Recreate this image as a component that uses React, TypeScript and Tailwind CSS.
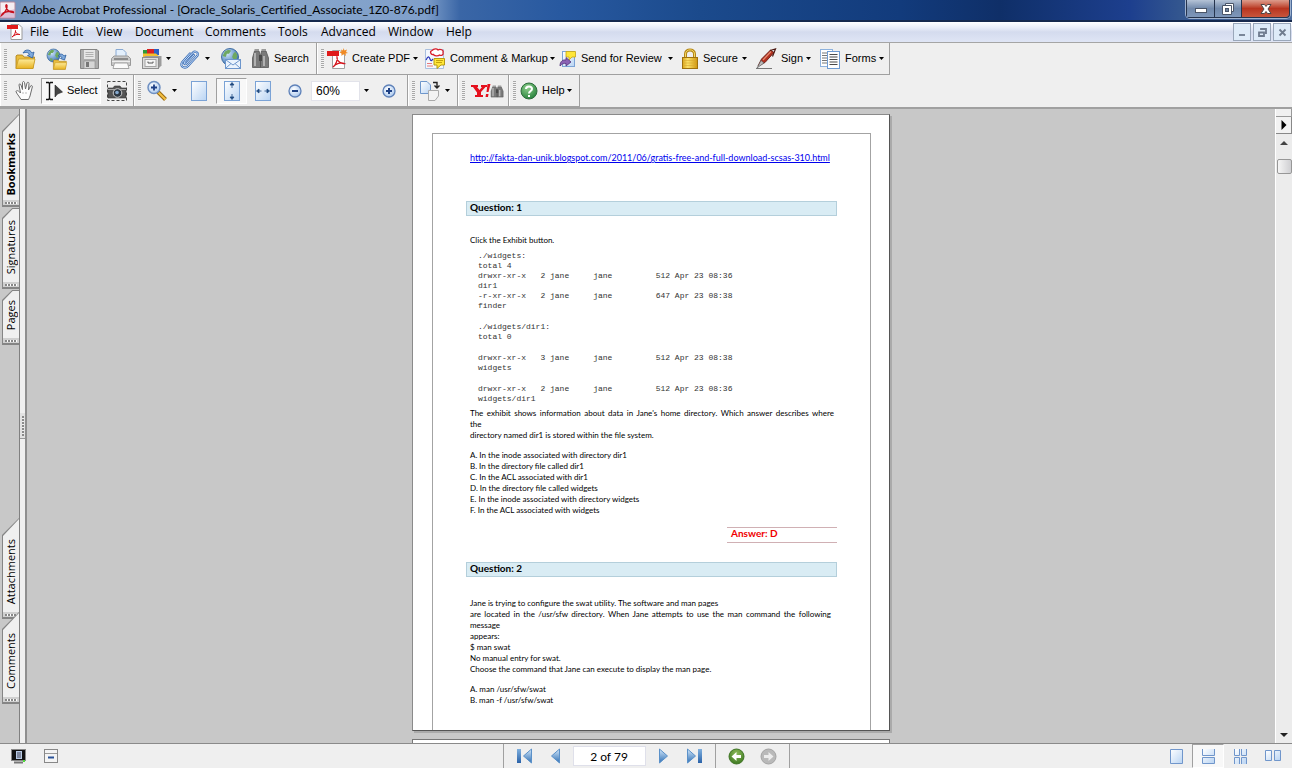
import type { ReactNode } from "react";

const SEGOE = "font-['Open_Sans','Noto_Sans',sans-serif]";
const CAPTION = "font-['Lato','Open_Sans',sans-serif] [font-variant-ligatures:none]";

/* ---------- icons ---------- */

function Svg({ w = 22, h = 22, children }: { w?: number; h?: number; children: ReactNode }) {
  return (
    <svg width={w} height={h} viewBox={`0 0 ${w} ${h}`} className="shrink-0" aria-hidden="true">
      {children}
    </svg>
  );
}

function Defs() {
  return (
    <svg width="0" height="0" className="absolute" aria-hidden="true">
      <defs>
        <linearGradient id="gold" x1="0" y1="0" x2="0" y2="1">
          <stop offset="0" stopColor="#fdeb9a" />
          <stop offset="1" stopColor="#e9b321" />
        </linearGradient>
        <linearGradient id="lockg" x1="0" y1="0" x2="1" y2="0">
          <stop offset="0" stopColor="#d9a41c" />
          <stop offset=".35" stopColor="#fbe26a" />
          <stop offset="1" stopColor="#cf950f" />
        </linearGradient>
        <linearGradient id="sheet" x1="0" y1="0" x2="1" y2="1">
          <stop offset="0" stopColor="#ffffff" />
          <stop offset="1" stopColor="#b9d4f3" />
        </linearGradient>
        <linearGradient id="bluev" x1="0" y1="0" x2="0" y2="1">
          <stop offset="0" stopColor="#d3e8fb" />
          <stop offset="1" stopColor="#2f6fb4" />
        </linearGradient>
        <linearGradient id="bar" x1="0" y1="0" x2="0" y2="1">
          <stop offset="0" stopColor="#7fb0df" />
          <stop offset="1" stopColor="#2a62a8" />
        </linearGradient>
        <radialGradient id="globe" cx=".35" cy=".3" r=".8">
          <stop offset="0" stopColor="#cfe6fb" />
          <stop offset="1" stopColor="#2b67ab" />
        </radialGradient>
        <radialGradient id="green" cx=".4" cy=".3" r=".8">
          <stop offset="0" stopColor="#8ecf8c" />
          <stop offset="1" stopColor="#1e7a35" />
        </radialGradient>
        <radialGradient id="olive" cx=".5" cy=".3" r=".8">
          <stop offset="0" stopColor="#8dbb5a" />
          <stop offset="1" stopColor="#33701a" />
        </radialGradient>
        <radialGradient id="lens" cx=".4" cy=".35" r=".7">
          <stop offset="0" stopColor="#ffffff" />
          <stop offset="1" stopColor="#a6c6ee" />
        </radialGradient>
      </defs>
    </svg>
  );
}

const Globe = ({ cx, cy, r }: { cx: number; cy: number; r: number }) => (
  <g transform={`translate(${cx} ${cy}) scale(${r / 8})`}>
    <circle r="8" fill="url(#globe)" stroke="#2c5c96" strokeWidth=".8" />
    <path d="M-5-5C-3-7 0-7 1-6L-1-3-3-3-4 0-7-1ZM3-3 5-5 7-2 6 2 4 3 2 0ZM-4 3-1 4-2 7-4 6Z" fill="#6fa860" />
  </g>
);

const AppIcon = () => (
  <Svg w={16} h={18}>
    <rect x="0" y="1" width="15" height="16" rx="1" fill="#f6eef2" stroke="#b98a9b" />
    <path d="M0 12 15 8V17H0Z" fill="#c9a2c4" opacity=".6" />
    <path d="M1.500 14.500C5 12 7.500 7 7 4.500C6.500 3 5.500 4 6 6C7 9 10 11.500 13.500 11.500C14 10.500 11 10 8 10.500C5 11 2 13 1.500 14.500Z" fill="none" stroke="#c80f1c" strokeWidth="1.400" />
  </Svg>
);

const PdfDoc = () => (
  <Svg w={16} h={16}>
    <path d="M4 .5H12L15 3.500V15.500H4Z" fill="#fff" stroke="#9a9a9a" />
    <rect x="0" y="1" width="11" height="4" fill="#e01b1b" />
    <path d="M5 13C7 12 9 8 8.500 6.500C8 7.500 10 11 13 10.500C11 9.500 7 11 5 13Z" fill="none" stroke="#d4121a" />
  </Svg>
);

const Folder = () => (
  <g>
    <path d="M2 8V20.500H19L20.500 9H10L8.500 7H3Z" fill="#e9bd3e" stroke="#a97c12" strokeWidth=".8" />
    <path d="M2 20.500 4.500 11H21L19 20.500Z" fill="url(#gold)" stroke="#c99a22" strokeWidth=".8" />
  </g>
);

const OpenIcon = () => (
  <Svg>
    <Folder />
    <path d="M9 5C11 1 16 1 18 5L20 4 18.500 10 13.500 7.500 15.500 6.500C14 4 12 4 9 5Z" fill="#7ea9dc" stroke="#2b5d9e" strokeWidth=".8" />
  </Svg>
);

const OpenWebIcon = () => (
  <Svg>
    <Globe cx={7.5} cy={7.5} r={6.5} />
    <g transform="translate(6 7) scale(.7)"><Folder /></g>
    <path d="M12 8C14 5 17 6 18 8L20 7 18.500 12 14.500 10.500 16 9.500C15 8 14 8 12 8Z" fill="#7ea9dc" stroke="#2b5d9e" strokeWidth=".8" />
  </Svg>
);

const SaveIcon = () => (
  <Svg>
    <path d="M2.500 1.500H19L20.500 3V20.500H2.500Z" fill="#adadad" stroke="#858585" />
    <rect x="6" y="2" width="11" height="9" fill="#e6e6e6" />
    <path d="M7.500 4.500H15.500M7.500 6.500H15.500M7.500 8.500H15.500" stroke="#b0b0b0" />
    <rect x="6" y="13" width="11" height="7.500" fill="#d6d6d6" stroke="#8b8b8b" strokeWidth=".6" />
    <rect x="8" y="14" width="3" height="5" fill="#777" />
  </Svg>
);

const PrintIcon = () => (
  <Svg>
    <path d="M6 9V1.500H13L16 4.500V9Z" fill="#e3effc" stroke="#88a9d3" />
    <path d="M1.500 10.500 4 8H18L20.500 10.500V17.500H1.500Z" fill="#c8c8c8" stroke="#9a9a9a" />
    <rect x="4" y="10" width="14" height="2" fill="#8a8a8a" />
    <path d="M2 13.500H20" stroke="#efefef" />
    <path d="M4.500 15H17.500L19 20.500H3Z" fill="#fafafa" stroke="#a5a5a5" />
  </Svg>
);

const OrganizerIcon = () => (
  <Svg>
    <rect x="2" y="2" width="7" height="6" fill="#2e9a3a" />
    <rect x="6" y="1" width="8" height="5" fill="#d82222" />
    <rect x="13" y="1" width="5" height="6" fill="#2c5fc4" />
    <path d="M2 5.500H15L19 9H2Z" fill="#f2c02e" />
    <path d="M1.500 9.500 4.500 8H20.500V17.500L17.500 20.500H1.500Z" fill="#9c9c9c" />
    <rect x="1.500" y="9.500" width="16" height="11" fill="#dcdcdc" stroke="#8e8e8e" />
    <rect x="4" y="11.500" width="11" height="7" fill="#f5f5f5" stroke="#a5a5a5" />
    <path d="M7 13.500V15H12V13.500" fill="none" stroke="#555" />
  </Svg>
);

const CLIP = "M15 7 7.500 15.500C6 17 4.500 15.500 5.500 14L14 4.500C16 2.500 20 4.500 18.500 7.500L9 18C6 21.500 .500 18.500 3 14.500L11 5.500";
const ClipIcon = () => (
  <Svg>
    <path d={CLIP} fill="none" stroke="#3c6fb6" strokeWidth="2.200" strokeLinecap="round" />
    <path d={CLIP} fill="none" stroke="#c9defa" strokeWidth="1" strokeLinecap="round" />
  </Svg>
);

const MailIcon = () => (
  <Svg>
    <Globe cx={10} cy={9} r={8.5} />
    <rect x="5.500" y="11.500" width="15" height="9" fill="#eaf3fd" stroke="#6d96cc" />
    <path d="M6 12 13 17 20 12M6 20 11 15.500M20 20 15 15.500" fill="none" stroke="#6d96cc" />
  </Svg>
);

const Binoculars = () => (
  <g>
    <path d="M3.500 3H8L9.500 8V19.500H1.500V10ZM10.500 3H15L17.500 10V19.500H9.500V8Z" fill="#7a7a7a" stroke="#575757" strokeWidth=".8" />
    <path d="M4 5V18M13 8V18" stroke="#c5c5c5" strokeWidth="1.500" />
    <rect x="8" y="7" width="3" height="6" fill="#4a4a4a" />
    <path d="M3.500 2H8M10.500 2H15" stroke="#9b9b9b" strokeWidth="2" />
  </g>
);

const SearchIcon = () => <Svg w={19}><Binoculars /></Svg>;

const CreateIcon = () => (
  <Svg>
    <path d="M6.500 2.500H14L18.500 7V20.500H6.500Z" fill="#fff" stroke="#a0a0a0" />
    <rect x="1" y="3" width="12" height="5" fill="#df1a1a" />
    <path d="M7 19C10 17 12 11 11 9C10.500 11 13 16 18 15.500C15 14 10 15.500 7 19Z" fill="none" stroke="#d4121a" strokeWidth="1.300" />
    <path d="M17.500 0 18.500 2.500 21 1.500 20 4 22 5 19.500 5.500 20 8 17.500 6 15.500 8 15.500 5.500 13.500 4.500 15.500 3.500 15 1.500 17 2.500Z" fill="#f08a24" />
  </Svg>
);

const CommentIcon = () => (
  <Svg>
    <path d="M1.500 1.500H19.500V20.500H1.500Z" fill="#f3f7fd" stroke="#a9bfde" />
    <path d="M8 2.500C10 .5 13 .5 14 2C16 .5 20 2 19 4.500C20 7 17 8 15.500 7C14 8.500 10 8 9.500 6.500C6.500 7 5.500 3.500 8 2.500Z" fill="#fff" stroke="#d81f2a" strokeWidth="1.300" />
    <path d="M2 12C4 8 5 8 6 11S8 12 9 11" fill="none" stroke="#2733b8" strokeWidth="1.200" />
    <path d="M3 15.500H8M3 18H9" stroke="#e87979" />
    <path d="M10 10.500H20.500V17H17L13 20.500V17H10Z" fill="#ffe638" stroke="#b69a13" />
    <path d="M12 12.500H19M12 14.500H18" stroke="#c4a30d" />
  </Svg>
);

const ReviewIcon = () => (
  <Svg w={18} h={18}>
    <rect x="3.500" y="1.500" width="12" height="15" fill="url(#sheet)" stroke="#7ba3d6" />
    <path d="M7 1.500H16.500V7H13L10 10V7H7Z" fill="#ffe638" stroke="#c6a613" strokeWidth=".8" />
    <path d="M1 16C1 11 4 9.500 7 10V7.500L12 12 7 16V13.500C4.500 13 3 14 1 16Z" fill="#8c62b4" stroke="#503078" strokeWidth=".8" />
  </Svg>
);

const LockIcon = () => (
  <Svg w={18}>
    <path d="M4.500 10V6C4.500 .500 13.500 .500 13.500 6V10" fill="none" stroke="#b48514" strokeWidth="3" />
    <path d="M4.500 10V6C4.500 .500 13.500 .500 13.500 6V10" fill="none" stroke="#f4d969" />
    <rect x="1.500" y="9.500" width="15" height="11" fill="url(#lockg)" stroke="#9e7110" />
    <path d="M3 12.500H15M3 15H15M3 17.500H15" stroke="#d9a833" strokeWidth=".6" />
  </Svg>
);

const PenIcon = () => (
  <Svg>
    <path d="M1 20.500H17" stroke="#777" />
    <path d="M3 18 6.500 11 15.500 2 19 4.500 10 14.500Z" fill="#b0301f" stroke="#5c130c" strokeWidth=".8" />
    <path d="M8 12 16 3.500" stroke="#e58a70" strokeWidth="1.200" />
    <path d="M2 20 6 12.500 9 15Z" fill="#b9b9b9" stroke="#555" strokeWidth=".6" />
    <path d="M15 2.500 20.500 1 17.500 8.500" fill="none" stroke="#4a1710" strokeWidth="1.200" />
  </Svg>
);

const FormsIcon = () => (
  <Svg>
    <rect x="1.500" y="1.500" width="12" height="17" fill="#fff" stroke="#8eb2de" />
    <path d="M3 5H8M3 7.500H8M3 10H8M3 12.500H8M3 15H8" stroke="#777" />
    <rect x="8.500" y="3.500" width="12" height="17" fill="#fff" stroke="#6e9bd2" />
    <path d="M10.500 6.500H18.500M10.500 9H18.500M10.500 11.500H18.500M10.500 14H18.500M10.500 16.500H18.500" stroke="#4a4a4a" strokeWidth="1.200" />
  </Svg>
);

const HandIcon = () => (
  <Svg>
    <path d="M7 19.500C5 16 2.500 13.500 2 11.500C2.500 10 4.500 10.500 6.500 13L5 5C5 3.500 6.500 3.500 7 5L8.500 9.500 8.500 2.500C8.800 1.200 10.200 1.200 10.500 2.500L11.500 9 13 3C13.500 1.700 15 2.200 15 3.500L14.500 10 16.500 6C17.200 5 18.600 5.500 18.300 7L16.500 14C16 17 15 18 14.500 19.500Z" fill="#fdfdfd" stroke="#6c6c6c" />
    <path d="M9 12V14M12 12V14" stroke="#bbb" />
  </Svg>
);

const SelectIcon = () => (
  <Svg w={18} h={20}>
    <path d="M1 1.500H3.500L4.500 2.500 5.500 1.500H8M4.500 2V18M1 18.500H3.500L4.500 17.500 5.500 18.500H8" fill="none" stroke="#111" strokeWidth="1.400" />
    <path d="M10 4V16L12.500 13 17.500 11Z" fill="#444" stroke="#222" strokeWidth=".6" />
  </Svg>
);

const CameraIcon = () => (
  <Svg>
    <rect x="1.500" y="1.500" width="19" height="19" fill="none" stroke="#444" strokeDasharray="3 2" />
    <path d="M2 8H7L8.500 6H14L15.500 8H20V18H2Z" fill="#555" stroke="#333" strokeWidth=".6" />
    <path d="M2 9.500H20" stroke="#a8a8a8" />
    <circle cx="11.500" cy="13" r="4.300" fill="#2d3742" stroke="#ccc" />
    <circle cx="11" cy="12.500" r="1.800" fill="#86a9cf" />
  </Svg>
);

const ZoomIcon = () => (
  <Svg>
    <path d="M12 12 19.500 19.500" stroke="#9a6a10" strokeWidth="4" />
    <path d="M12.500 12.500 19.500 19.500" stroke="#f4c043" strokeWidth="2" />
    <circle cx="8" cy="7.500" r="6" fill="url(#lens)" stroke="#6f90c2" strokeWidth="1.500" />
    <path d="M8 4.500V10.500M5 7.500H11" stroke="#1d3f86" strokeWidth="1.800" />
  </Svg>
);

const SheetIcon = ({ mode }: { mode?: "tall" | "wide" }) => (
  <Svg w={18}>
    <rect x="1.500" y="1.500" width="15" height="19" fill="url(#sheet)" stroke="#7ba3d6" />
    {mode === "tall" && <path d="M9 2.500 11 5H7ZM9 5V8M9 19.500 11 17H7ZM9 17V14" fill="#1f4a80" stroke="#1f4a80" strokeWidth=".8" />}
    {mode === "wide" && <path d="M2.500 11 5 9V13ZM5 11H7.500M15.500 11 13 9V13ZM13 11H10.500" fill="#1f4a80" stroke="#1f4a80" strokeWidth=".8" />}
  </Svg>
);

const RoundSign = ({ plus }: { plus?: boolean }) => (
  <Svg w={14} h={14}>
    <circle cx="7" cy="7" r="6" fill="url(#lens)" stroke="#5f82b9" strokeWidth="1.300" />
    <path d={plus ? "M7 4V10M4 7H10" : "M4 7H10"} stroke="#1d4084" strokeWidth="2" />
  </Svg>
);

const RotateIcon = () => (
  <Svg>
    <path d="M1.500 1.500H8L11.500 5V13.500H1.500Z" fill="url(#sheet)" stroke="#6e96cb" />
    <path d="M9.500 10.500H19.500V16L16 20.500H9.500Z" fill="#f3f3f3" stroke="#aaa" />
    <path d="M14 2.500H18V7M15.500 5.500 18 8 20.500 5.500" fill="none" stroke="#222" strokeWidth="1.400" />
  </Svg>
);

const YahooIcon = () => (
  <Svg w={34} h={16}>
    <path d="M0 2H7V4H6L8.500 7 11 4H10V2H16V4H14.500L10 9V12H12V14H4V12H6V9.500L2 4H0Z" fill="#e5101d" />
    <path d="M16.500 1H19.500L17.500 9H15.500ZM15 11H17.500L17 14H14.500Z" fill="#e5101d" />
    <g transform="translate(19 2) scale(.75 .62)"><Binoculars /></g>
  </Svg>
);

const HelpIcon = () => (
  <Svg w={18} h={18}>
    <circle cx="9" cy="9" r="8" fill="url(#green)" stroke="#2d6e3c" />
    <path d="M6 7C6 3.500 12 3.500 12 7C12 9 9 9 9 11.500M9 13V15" fill="none" stroke="#fff" strokeWidth="2" />
  </Svg>
);

const StepIcon = ({ dir, end }: { dir: "back" | "next"; end?: boolean }) => {
  const w = end ? 18 : 12;
  return (
    <Svg w={w} h={16}>
      <g transform={dir === "next" ? `translate(${w} 0) scale(-1 1)` : undefined}>
        {end && <rect x="1" y="1" width="4" height="14" fill="url(#bar)" />}
        <path d={end ? "M15.500 1V15L7.500 8Z" : "M9.500 1V15L1.500 8Z"} fill="url(#bluev)" stroke="#5b91c9" />
      </g>
    </Svg>
  );
};

const ViewArrow = ({ off }: { off?: boolean }) => (
  <Svg w={17} h={17}>
    <circle cx="8.500" cy="8.500" r="7.500" fill={off ? "#b9b9b9" : "url(#olive)"} stroke={off ? "#a3a3a3" : "#3f7425"} />
    <path
      transform={off ? "translate(17 0) scale(-1 1)" : undefined}
      d="M3.500 8.500 8.500 4V7H13V10H8.500V13Z" fill={off ? "#ececec" : "#fff"}
    />
  </Svg>
);

const Caret = () => (
  <svg width="5" height="3" viewBox="0 0 5 3" className="shrink-0" aria-hidden="true">
    <path d="M0 0H5L2.500 3Z" fill="#000" />
  </svg>
);

/* ---------- toolbar parts ---------- */

function Grip() {
  return (
    <span className="mr-[2px] ml-[3px] h-5 w-[3px] shrink-0 bg-[repeating-linear-gradient(to_bottom,#a8a8a8_0px,#a8a8a8_1px,#f4f4f4_1px,#f4f4f4_2px)]" />
  );
}

function Bar({ children }: { children: ReactNode }) {
  return (
    <div role="toolbar" className="flex h-full items-center border-r border-l border-r-[#a0a0a0] border-l-white">
      <Grip />
      {children}
    </div>
  );
}

function Tool({ name, icon, label, caret, className = "w-8 justify-center" }: {
  name: string; icon: ReactNode; label?: string; caret?: boolean; className?: string;
}) {
  return (
    <button type="button" aria-label={name} className={`flex h-[26px] shrink-0 items-center whitespace-nowrap ${className}`}>
      {icon}
      {label && <span className="pl-1">{label}</span>}
      {caret && <span className="ml-auto"><Caret /></span>}
    </button>
  );
}

/* ---------- side tabs ---------- */

function Tab({ label, className, bold, steep }: { label: string; className: string; bold?: boolean; steep?: boolean }) {
  const clip = steep
    ? "[clip-path:polygon(100%_0,100%_100%,0_100%,0_17px)]"
    : "[clip-path:polygon(100%_0,60%_0,0_10px,0_100%,100%_100%)]";
  return (
    <button type="button" className={`flex w-[17px] shrink-0 bg-[#858585] pt-px pl-px ${clip} ${className}`}>
      <span className={`flex h-full w-full flex-col bg-[#f0f0f0] ${clip}`}>
        <span className={`flex flex-1 items-end justify-center ${bold ? "pb-1" : "pb-2"} ${SEGOE}`}>
          <span className={`rotate-180 text-[11px] leading-4 [writing-mode:vertical-rl] ${bold ? "font-bold" : ""}`}>{label}</span>
        </span>
        <span className="flex h-[5px] items-center justify-center bg-[#d0d0d0]">
          <span className="h-[2px] w-3 bg-[repeating-linear-gradient(to_right,#888_0px,#888_2px,#fff_2px,#fff_3px)]" />
        </span>
        <span className="h-[2px] bg-[#858585]" />
      </span>
    </button>
  );
}

/* ---------- document ---------- */

const listing = [
  `./widgets:
total 4
drwxr-xr-x   2 jane     jane         512 Apr 23 08:36
dir1
-r-xr-xr-x   2 jane     jane         647 Apr 23 08:38
finder`,
  `./widgets/dir1:
total 0`,
  `drwxr-xr-x   3 jane     jane         512 Apr 23 08:38
widgets`,
  `drwxr-xr-x   2 jane     jane         512 Apr 23 08:36
widgets/dir1`,
];

function Question({ n }: { n: number }) {
  return (
    <h2 className="-ml-1 h-[15px] border border-[#b4cfdb] bg-[#d9ecf4] pl-[3px] text-[10px] leading-[10px] font-bold">
      Question: {n}
    </h2>
  );
}

function PdfPage() {
  return (
    <article className="h-[617px] w-[478px] shrink-0 border border-[#8a8a8a] border-r-[#555] border-b-[#555] bg-white pt-[18px] pr-[18px] pl-[19px] font-['Lato',sans-serif] text-[8px] leading-[11px] text-black shadow-[2px_2px_0_#aaa]">
      <div className="h-full border border-b-0 border-[#a3a3a3] pr-[33px] pl-[37px]">
        <p className="mt-[18px] leading-3">
          <a href="http://fakta-dan-unik.blogspot.com/2011/06/gratis-free-and-full-download-scsas-310.html" className="text-[9px] text-[#0000ee] underline">
            http://fakta-dan-unik.blogspot.com/2011/06/gratis-free-and-full-download-scsas-310.html
          </a>
        </p>
        <div className="mt-[37px]"><Question n={1} /></div>
        <p className="mt-[19px]">Click the Exhibit button.</p>
        <div className="mt-[5px] ml-2 flex flex-col gap-[11px] text-[#333]">
          {listing.map((part) => (
            <pre key={part} className="font-['Liberation_Mono',monospace] text-[8px] leading-[10px]">{part}</pre>
          ))}
        </div>
        <p className="mt-1 mr-[3px] [text-align-last:justify]">
          The exhibit shows information about data in Jane's home directory. Which answer describes where
        </p>
        <p>the<br />directory named dir1 is stored within the file system.</p>
        <ol className="mt-[9px]">
          <li>A. In the inode associated with directory dir1</li>
          <li>B. In the directory file called dir1</li>
          <li>C. In the ACL associated with dir1</li>
          <li>D. In the directory file called widgets</li>
          <li>E. In the inode associated with directory widgets</li>
          <li>F. In the ACL associated with widgets</li>
        </ol>
        <p className="mt-[11px] ml-auto h-4 w-[110px] border-y border-[#d0b0b4] pl-1 text-[10px] leading-[10px] font-bold text-[#f00000]">Answer: D</p>
        <div className="mt-[19px]"><Question n={2} /></div>
        <p className="mt-[21px]">Jane is trying to configure the swat utility. The software and man pages</p>
        <p className="mr-[6px] [text-align-last:justify]">
          are located in the /usr/sfw directory. When Jane attempts to use the man command the following
        </p>
        <p>message<br />appears:<br />$ man swat<br />No manual entry for swat.<br />Choose the command that Jane can execute to display the man page.</p>
        <ol className="mt-[9px]">
          <li>A. man /usr/sfw/swat</li>
          <li>B. man -f /usr/sfw/swat</li>
        </ol>
      </div>
    </article>
  );
}

/* ---------- app ---------- */

const menus = [
  ["File", "w-8"], ["Edit", "w-[34px]"], ["View", "w-[39px]"], ["Document", "w-[70px]"], ["Comments", "w-[73px]"],
  ["Tools", "w-[43px]"], ["Advanced", "w-[67px]"], ["Window", "w-[58px]"], ["Help", "w-[40px]"],
];

const views = [
  { name: "Single page", d: "M2.500 1.500H14.500V15.500H2.500Z", sel: false },
  { name: "Continuous", d: "M2.500 1V7.500H14.500V1M2.500 9.500H14.500V15.500H2.500Z", sel: true },
  { name: "Continuous facing", d: "M2.500 1V7.500H7.500V1M9.500 1V7.500H14.500V1M2.500 16V9.500H7.500V16M9.500 16V9.500H14.500V16", sel: false },
  { name: "Facing", d: "M1.500 2.500H7.500V12.500H1.500ZM10.500 2.500H16.500V12.500H10.500Z", sel: false },
];

const STEEL = "bg-linear-to-b from-[#b5c3d6] via-[#7189ab] to-[#7e97ba]";

export default function App() {
  return (
    <div className="flex h-screen flex-col overflow-hidden bg-[#efefef] font-['Liberation_Sans',Arial,sans-serif] text-[11px] text-black">
      <Defs />

      <header className="flex h-[22px] shrink-0 items-center border-b-2 border-[#16294d] bg-[linear-gradient(to_right,#7190bb_0px,#8ba8cb_100px,#86a5cb_300px,#7f9fca_425px,#3a66a6_460px,#2859a0_560px,#1b4a8c_700px,#123b7c_900px,#0f2f68_1000px,#1d3f8e_1130px,#33568f_1180px,#4d6c9b_1292px)]">
        <AppIcon />
        <h1 className={`pl-[5px] text-[12px] leading-5 ${CAPTION}`}>
          Adobe Acrobat Professional - [Oracle_Solaris_Certified_Associate_1Z0-876.pdf]
        </h1>
        <div className="mr-[2px] mb-auto ml-auto flex h-[18px] rounded-b border border-t-0 border-[#26344d] shadow-[0_0_0_1px_#9fb2cf]">
          <button type="button" aria-label="Minimize" className={`flex w-[28px] items-center justify-center border-r border-[#26344d] ${STEEL}`}>
            <Svg w={12} h={12}><rect x=".5" y="5.500" width="11" height="4" fill="#fff" stroke="#4a5568" /></Svg>
          </button>
          <button type="button" aria-label="Restore" className={`flex w-[27px] items-center justify-center border-r border-[#26344d] ${STEEL}`}>
            <Svg w={12} h={12}>
              <path d="M3.500 .5H11.500V8.500H3.500Z" fill="#fff" stroke="#4a5568" />
              <path d="M.5 2.500H9.500V11.500H.5Z" fill="#fff" stroke="#4a5568" />
              <rect x="3.500" y="5.500" width="3" height="3" fill="#71859f" stroke="#4a5568" />
            </Svg>
          </button>
          <button type="button" aria-label="Close" className="flex w-[47px] items-center justify-center rounded-br bg-linear-to-b from-[#dc9c8c] via-[#b8341f] to-[#c8553c]">
            <Svg w={12} h={12}>
              <path d="M1 1.500H4.500L6 3.500 7.500 1.500H11L8 6 11 10.500H7.500L6 8.500 4.500 10.500H1L4 6Z" fill="#fff" stroke="#4f4545" />
            </Svg>
          </button>
        </div>
      </header>

      <nav className={`flex h-[21px] shrink-0 items-center border-b border-[#a5a5a5] bg-[linear-gradient(to_bottom,#ffffff,#e8ecf7_30%,#d4dbee_50%,#dfe5f5)] pl-[7px] text-[12px] ${SEGOE}`}>
        <PdfDoc />
        <ul className="flex pl-[7px]">
          {menus.map(([m, w]) => (
            <li key={m} className={w}><button type="button" className="leading-5">{m}</button></li>
          ))}
        </ul>
        <div className="ml-auto flex gap-[2px] pr-px">
          {[
            ["Minimize document", "M5 11H11"],
            ["Restore document", "M7 6V5H12V9H11M5 8.500H10V12H5Z"],
            ["Close document", "M5.500 5.500 11.500 11.500M11.500 5.500 5.500 11.500"],
          ].map(([n, d]) => (
            <button key={n} type="button" aria-label={n} className="flex h-[18px] w-[18px] items-center justify-center border border-[#9aa7ba] bg-[#deebf8]">
              <Svg w={16} h={16}><path d={d} fill="none" stroke="#6f7c8e" strokeWidth="1.800" /></Svg>
            </button>
          ))}
        </div>
      </nav>

      <div className="flex h-8 shrink-0">
        <div className="flex border-b border-[#a0a0a0]">
          <Bar>
            <Tool name="Open" icon={<OpenIcon />} />
            <Tool name="Open web page" icon={<OpenWebIcon />} />
            <Tool name="Save" icon={<SaveIcon />} />
            <Tool name="Print" icon={<PrintIcon />} />
            <Tool name="Organizer" icon={<OrganizerIcon />} caret className="ml-1 w-[30px]" />
            <Tool name="Attach" icon={<ClipIcon />} caret className="ml-2 w-[31px]" />
            <Tool name="Email" icon={<MailIcon />} className="ml-[10px] w-[31px]" />
            <Tool name="Search" icon={<SearchIcon />} label="Search" className="w-[65px]" />
          </Bar>
          <Bar>
            <Tool name="Create PDF" icon={<CreateIcon />} label="Create PDF" caret className="w-[92px]" />
            <Tool name="Comment & Markup" icon={<CommentIcon />} label="Comment & Markup" caret className="ml-[6px] w-[131px]" />
            <Tool name="Send for Review" icon={<ReviewIcon />} label="Send for Review" caret className="ml-1 w-[114px]" />
            <Tool name="Secure" icon={<LockIcon />} label="Secure" caret className="ml-2 w-[66px]" />
            <Tool name="Sign" icon={<PenIcon />} label="Sign" caret className="ml-2 w-[56px]" />
            <Tool name="Forms" icon={<FormsIcon />} label="Forms" caret className="mr-[5px] ml-2 w-[65px]" />
          </Bar>
        </div>
      </div>

      <div className="flex h-8 shrink-0">
        <div className="flex border-b border-[#a0a0a0]">
          <Bar>
            <Tool name="Hand" icon={<HandIcon />} />
            <Tool name="Select" icon={<SelectIcon />} label="Select" className="w-[60px] border border-t-[#a0a0a0] border-r-white border-b-white border-l-[#a0a0a0] bg-[#f8f8f8] pl-[3px]" />
            <Tool name="Snapshot" icon={<CameraIcon />} />
          </Bar>
          <Bar>
            <Tool name="Zoom" icon={<ZoomIcon />} caret className="ml-[3px] w-[31px]" />
            <Tool name="Actual size" icon={<SheetIcon />} className="ml-1 w-[35px] justify-center" />
            <Tool name="Fit page" icon={<SheetIcon mode="tall" />} className="w-[31px] justify-center border border-t-[#a0a0a0] border-r-white border-b-white border-l-[#a0a0a0] bg-[#f8f8f8]" />
            <Tool name="Fit width" icon={<SheetIcon mode="wide" />} />
            <Tool name="Zoom out" icon={<RoundSign />} />
            <input aria-label="Zoom level" defaultValue="60%" className="h-5 w-[49px] border border-[#e2e3ea] bg-white px-1 text-[12px]" />
            <Tool name="Zoom levels" icon={<Caret />} className="w-3 justify-center" />
            <Tool name="Zoom in" icon={<RoundSign plus />} className="mr-[2px] w-[33px] justify-center" />
          </Bar>
          <Bar>
            <Tool name="Rotate" icon={<RotateIcon />} caret className="mr-[7px] ml-[2px] w-[31px]" />
          </Bar>
          <Bar>
            <Tool name="Yahoo search" icon={<YahooIcon />} className="w-[41px] justify-center" />
          </Bar>
          <Bar>
            <Tool name="Help" icon={<HelpIcon />} label="Help" caret className="mr-[7px] ml-[2px] w-[52px]" />
          </Bar>
        </div>
      </div>

      <main className="flex min-h-0 flex-1 border-t-2 border-[#a0a0a0]">
        <aside className="flex w-5 shrink-0 flex-col items-end overflow-hidden border-r border-[#808080] bg-[#c8c8c8] pt-[5px]">
          <Tab label="Bookmarks" bold steep className="h-[93px]" />
          <Tab label="Signatures" className="mt-px h-[81px]" />
          <Tab label="Pages" className="mt-px h-[55px]" />
          <div className="mt-auto flex flex-col pb-[39px]">
            <Tab label="Attachments" steep className="h-[101px]" />
            <Tab label="Comments" steep className="relative -mt-[7px] h-[92px]" />
          </div>
        </aside>
        <div className="flex w-[7px] shrink-0 items-center border-r-2 border-[#8f8f8f] bg-[#f0f0f0]">
          <span className="flex h-[26px] w-full items-center justify-center border-b border-[#999] bg-[#e2e2e2]">
            <span className="h-5 w-[2px] bg-[repeating-linear-gradient(to_bottom,#8a8a8a_0px,#8a8a8a_2px,#f0f0f0_2px,#f0f0f0_3px)]" />
          </span>
        </div>

        <section className="flex min-w-0 flex-1 flex-col items-center gap-2 overflow-hidden bg-[#c8c8c8] pt-[5px]">
          <PdfPage />
          <div className="h-16 w-[478px] shrink-0 border border-[#777] bg-white" />
        </section>

        <div className="flex w-[17px] shrink-0 flex-col items-center border-l border-white bg-[#ececec]">
          <span className="h-2 w-full border-r border-b border-[#999] bg-[#f0f0f0]" />
          <button type="button" aria-label="Pane options" className="flex h-[17px] w-full items-center justify-center border-r border-b border-[#888] bg-[#f2f2f2]">
            <Svg w={6} h={10}><path d="M.5 0 5.500 5 .5 10Z" fill="#000" /></Svg>
          </button>
          <button type="button" aria-label="Scroll up" className="flex h-[17px] w-full items-center justify-center">
            <Svg w={8} h={4}><path d="M4 0 8 4H0Z" fill="#444" /></Svg>
          </button>
          <span className="mt-2 h-[15px] w-[15px] rounded-[2px] border border-[#979797] bg-linear-to-r from-[#f5f5f5] to-[#cfcfd2]" />
          <button type="button" aria-label="Scroll down" className="mt-auto flex h-[17px] w-full items-center justify-center">
            <Svg w={8} h={4}><path d="M0 0H8L4 4Z" fill="#222" /></Svg>
          </button>
        </div>
      </main>

      <footer className="grid h-[25px] shrink-0 grid-cols-[1fr_auto_1fr] border-t border-[#8a8a8a] bg-[#efefef]">
        <div className="flex items-center gap-4 pl-[11px]">
          <button type="button" aria-label="Full screen">
            <Svg w={16} h={16}>
              <rect x=".5" y="1.500" width="14" height="11" fill="#111" stroke="#888" />
              <rect x="5" y="3" width="6" height="8" fill="#b9cbe6" />
              <path d="M6 5H10M6 7H10M6 9H10" stroke="#445" />
              <path d="M3 14.500H12" stroke="#777" strokeWidth="2" />
              <rect x="12" y="12" width="2" height="2" fill="#4fdc3a" />
            </Svg>
          </button>
          <button type="button" aria-label="Hide toolbars">
            <Svg w={15} h={16}>
              <rect x="1.500" y="1.500" width="13" height="13" fill="#f4f4f4" stroke="#888" />
              <path d="M2 5.500H14" stroke="#999" />
              <path d="M5 9.500H11" stroke="#2a5298" strokeWidth="2" />
            </Svg>
          </button>
        </div>

        <div className="flex">
          <div className="flex w-[213px] items-center justify-center gap-[11px] border-r border-l border-[#a0a0a0]">
            <div className="flex gap-4">
              <button type="button" aria-label="First page"><StepIcon dir="back" end /></button>
              <button type="button" aria-label="Previous page"><StepIcon dir="back" /></button>
            </div>
            <input aria-label="Page number" defaultValue="2 of 79" className={`h-5 w-[73px] border border-[#dfe0ea] bg-white text-center text-[12px] ${CAPTION}`} />
            <div className="flex gap-4">
              <button type="button" aria-label="Next page"><StepIcon dir="next" /></button>
              <button type="button" aria-label="Last page"><StepIcon dir="next" end /></button>
            </div>
          </div>
          <div className="flex w-[74px] items-center justify-center gap-[15px] border-r border-[#a0a0a0]">
            <button type="button" aria-label="Previous view"><ViewArrow /></button>
            <button type="button" aria-label="Next view"><ViewArrow off /></button>
          </div>
        </div>

        <div className="flex items-stretch justify-end pr-1">
          {views.map((v) => (
            <button
              key={v.name}
              type="button"
              aria-label={v.name}
              className={`flex w-8 items-center justify-center border ${v.sel ? "border-t-[#a0a0a0] border-r-white border-b-white border-l-[#a0a0a0] bg-[#f8f8f8]" : "border-transparent"}`}
            >
              <Svg w={17} h={17}><path d={v.d} fill="url(#sheet)" stroke="#7096cb" /></Svg>
            </button>
          ))}
        </div>
      </footer>
    </div>
  );
}
